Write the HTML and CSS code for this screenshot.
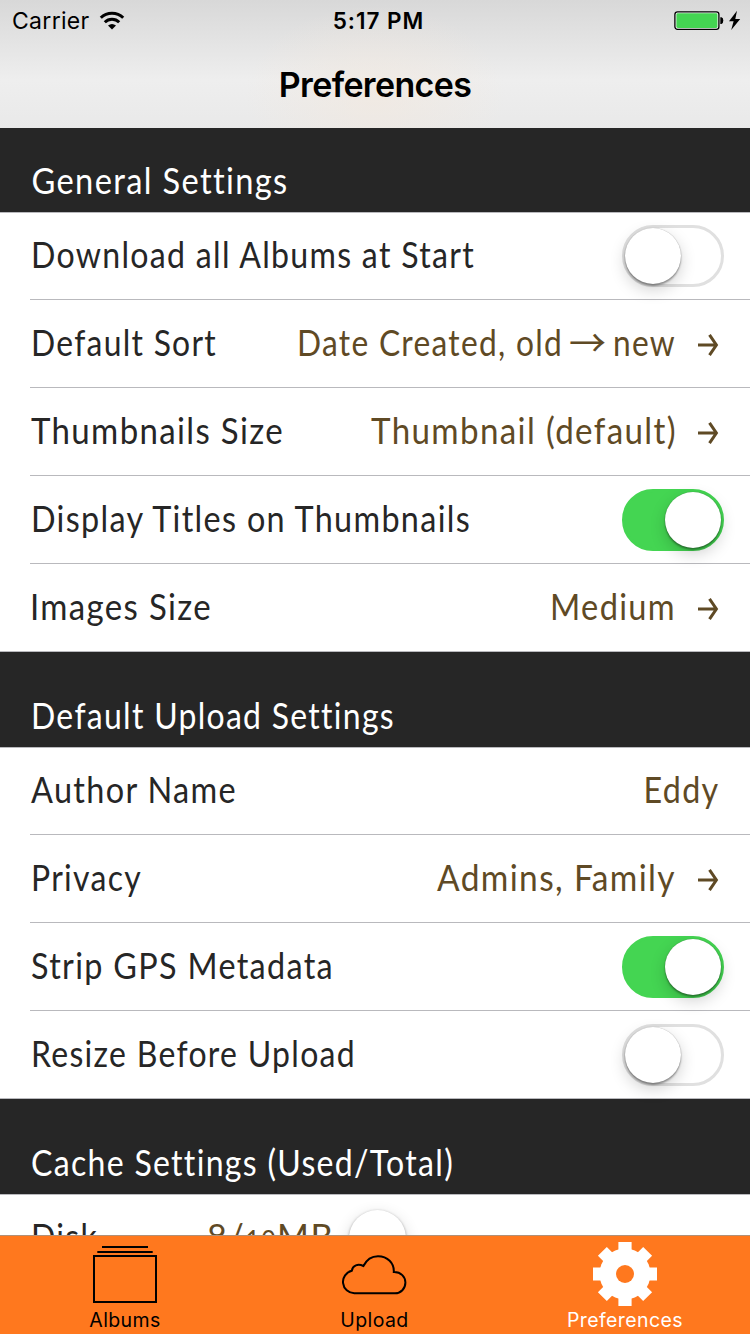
FILE: index.html
```html
<!DOCTYPE html>
<html lang="en">
<head>
<meta charset="utf-8">
<title>Preferences</title>
<link rel="stylesheet" href="styles.css">
</head>
<body>
<div class="screen">
  <header class="navbar">
    <div class="status">
      <div class="status-left">
        <span class="carrier">Carrier</span>
        <svg class="wifi" width="26" height="20" viewBox="0 0 26 20"><g fill="none" stroke="#000" stroke-width="3"><path d="M1.8 6.8A16 16 0 0 1 24.2 6.8"/><path d="M5.8 11.3A10.3 10.3 0 0 1 20.2 11.3"/></g><path d="M9 14.4Q13 11.4 17 14.4L13 18.6Z"/></svg>
      </div>
      <span class="time">5:17 PM</span>
      <svg class="battery" width="70" height="22" viewBox="0 0 70 22"><rect x=".9" y="1.8" width="44" height="17.6" rx="2.6" fill="#f4f4f4" stroke="#000" stroke-width="1.3"/><rect x="2.4" y="3.3" width="41" height="14.6" rx="1.4" fill="#44d552"/><path d="M46.3 7.2h1.2q1.8.5 1.8 3.4t-1.8 3.4h-1.2z"/><path d="M63 .7L55 11.3h4.6L57.2 20 66.2 8.9h-4.9z"/></svg>
    </div>
    <h1 class="title">Preferences</h1>
  </header>

  <main class="list">
    <h2 class="section first"><svg class="copy" width="262" height="84"><text x="1.5" y="66" textLength="257" lengthAdjust="spacingAndGlyphs">General Settings</text></svg></h2>
    <div class="group">
      <div class="row"><svg class="copy" width="450" height="87"><text x="1" y="56" textLength="444" lengthAdjust="spacingAndGlyphs">Download all Albums at Start</text></svg><span class="switch"></span></div>
      <div class="row"><svg class="copy" width="190" height="87"><text x="1" y="56" textLength="186" lengthAdjust="spacingAndGlyphs">Default Sort</text></svg>
        <svg class="copy value" width="381" height="87"><text x="2" y="56" textLength="266" lengthAdjust="spacingAndGlyphs">Date Created, old</text><text class="arrow-glyph" x="274" y="57">→</text><text x="318" y="56" textLength="63" lengthAdjust="spacingAndGlyphs">new</text></svg>
        <svg class="disclose" width="21" height="24" viewBox="0 0 21 24"><path d="M0 12H18.6M11.5 1.8L18.4 12 11.5 22.2"/></svg></div>
      <div class="row"><svg class="copy" width="258" height="87"><text x="1" y="56" textLength="253" lengthAdjust="spacingAndGlyphs">Thumbnails Size</text></svg>
        <svg class="copy value" width="305" height="87"><text x="0" y="56" textLength="306" lengthAdjust="spacingAndGlyphs">Thumbnail (default)</text></svg>
        <svg class="disclose" width="21" height="24" viewBox="0 0 21 24"><path d="M0 12H18.6M11.5 1.8L18.4 12 11.5 22.2"/></svg></div>
      <div class="row"><svg class="copy" width="445" height="87"><text x="1" y="56" textLength="440" lengthAdjust="spacingAndGlyphs">Display Titles on Thumbnails</text></svg><span class="switch on"></span></div>
      <div class="row"><svg class="copy" width="190" height="87"><text x="0" y="56" textLength="182" lengthAdjust="spacingAndGlyphs">Images Size</text></svg>
        <svg class="copy value" width="127" height="87"><text x="1" y="56" textLength="126" lengthAdjust="spacingAndGlyphs">Medium</text></svg>
        <svg class="disclose" width="21" height="24" viewBox="0 0 21 24"><path d="M0 12H18.6M11.5 1.8L18.4 12 11.5 22.2"/></svg></div>
    </div>

    <h2 class="section"><svg class="copy" width="370" height="95"><text x="1" y="77" textLength="364" lengthAdjust="spacingAndGlyphs">Default Upload Settings</text></svg></h2>
    <div class="group">
      <div class="row"><svg class="copy" width="210" height="87"><text x="1" y="56" textLength="206" lengthAdjust="spacingAndGlyphs">Author Name</text></svg>
        <svg class="copy value last" width="77" height="87"><text x="1.5" y="56" textLength="76" lengthAdjust="spacingAndGlyphs">Eddy</text></svg></div>
      <div class="row"><svg class="copy" width="115" height="87"><text x="1" y="56" textLength="111" lengthAdjust="spacingAndGlyphs">Privacy</text></svg>
        <svg class="copy value" width="240" height="87"><text x="1" y="56" textLength="239" lengthAdjust="spacingAndGlyphs">Admins, Family</text></svg>
        <svg class="disclose" width="21" height="24" viewBox="0 0 21 24"><path d="M0 12H18.6M11.5 1.8L18.4 12 11.5 22.2"/></svg></div>
      <div class="row"><svg class="copy" width="310" height="87"><text x="1" y="56" textLength="303" lengthAdjust="spacingAndGlyphs">Strip GPS Metadata</text></svg><span class="switch on"></span></div>
      <div class="row"><svg class="copy" width="330" height="87"><text x="1" y="56" textLength="325" lengthAdjust="spacingAndGlyphs">Resize Before Upload</text></svg><span class="switch"></span></div>
    </div>

    <h2 class="section"><svg class="copy" width="430" height="95"><text x="1" y="77" textLength="423" lengthAdjust="spacingAndGlyphs">Cache Settings (Used/Total)</text></svg></h2>
    <div class="group">
      <div class="row slider-row"><svg class="copy" width="177" height="87"><text x="1" y="56" textLength="67" lengthAdjust="spacingAndGlyphs">Disk</text></svg>
        <svg class="copy amount" width="142" height="87"><text x="0" y="56" textLength="127" lengthAdjust="spacingAndGlyphs">8/<tspan class="oldstyle">10</tspan>MB</text></svg><span class="knob"></span></div>
    </div>
  </main>

  <nav class="tabs">
    <a class="tab"><svg width="66" height="66" viewBox="0 0 66 66"><g fill="none" stroke="#000" stroke-width="2"><path d="M10 6H56M5.3 11H60.7"/><rect x="2" y="15" width="62" height="46"/></g></svg><span>Albums</span></a>
    <a class="tab"><svg width="66" height="66" viewBox="0 0 66 66"><path fill="none" stroke="#000" stroke-width="2" d="M12.3 52.3A11.4 11.4 0 0 1 9.8 29.8C10.6 24.2 16 22.5 21.4 25C24.5 18.8 29.5 15.2 36 15.2C45.5 15.2 52.3 22 51.8 31C59 30.8 63.4 36 63.4 41.5C63.4 47.8 58.8 52.3 53 52.3Z"/></svg><span>Upload</span></a>
    <a class="tab active"><svg width="66" height="66" viewBox="-33 -33 66 66"><g fill="#fff"><circle r="25.5"/><path d="M-6.6-32H6.6V32H-6.6ZM-32-6.6H32V6.6H-32Z"/><path transform="rotate(45)" d="M-6.3-32H6.3V32H-6.3ZM-32-6.3H32V6.3H-32Z"/></g><circle r="9" fill="#ff781e"/></svg><span>Preferences</span></a>
  </nav>
</div>
</body>
</html>
```
FILE: styles.css
```css
* { box-sizing: border-box; }
body { margin: 0; overflow: hidden; }
.screen {
  width: 750px; height: 1334px;
  display: flex; flex-direction: column;
  overflow: hidden; background: #fff;
  font-family: Inter, "Liberation Sans", sans-serif;
}
.navbar {
  height: 128px; flex: none;
  background:
    radial-gradient(ellipse 130px 90px at 375px 95px, rgba(243, 232, 221, .6), rgba(243, 232, 221, 0)),
    linear-gradient(#d8d8d8, #e2e2e2 36px, #eee 80px, #e9e9e9);
}
.status {
  height: 41px;
  display: grid; grid-template-columns: 1fr auto 1fr; align-items: center;
  padding: 0 6px 0 12px;
}
.status-left { display: flex; align-items: center; gap: 9px; }
.carrier { font-size: 23px; letter-spacing: .3px; }
.wifi { display: block; }
.time { font-size: 22.5px; font-weight: 600; letter-spacing: 1px; padding-left: 1px; }
.battery { justify-self: end; }
.title {
  margin: 0; height: 87px; line-height: 87px; text-align: center;
  font-size: 34px; font-weight: 600; letter-spacing: -.65px;
}
.list { flex: 1; min-height: 0; overflow: hidden; }
.section { margin: 0; height: 95px; padding-left: 30px; background: #262626; font-weight: 400; }
.section.first { height: 84px; }
.section .copy { fill: #fff; }
.copy {
  display: block; flex: none; overflow: visible; fill: #262626;
  font-family: Lato, "Noto Sans", sans-serif; font-size: 37px; letter-spacing: 1.5px;
}
.group { border-top: 1px solid #b9b9bd; }
.row {
  height: 88px; display: flex; align-items: center;
  margin-left: 30px; padding-right: 26px;
  border-bottom: 1px solid #b9b9bd;
}
.row:first-child { height: 87px; }
.row:first-child .copy { margin-top: -1px; }
.row:last-child { margin-left: 0; padding-left: 30px; }
.value { margin-left: auto; fill: #5f4a25; }
.amount { fill: #5f4a25; }
.value.last { margin-right: 5px; }
.arrow-glyph { font-family: "Noto Sans CJK JP", sans-serif; font-size: 37px; letter-spacing: 0; }
.oldstyle { font-size: 27px; }
.disclose {
  flex: none; margin: 2px 5px 0 22px;
  fill: none; stroke: #5f4a25; stroke-width: 3;
}
.switch {
  width: 102px; height: 62px; flex: none; margin-left: auto;
  display: flex; padding: 0; border: 3px solid #e0e0e0; border-radius: 31px;
}
.switch::before {
  content: ""; width: 56px; height: 56px; border-radius: 50%; background: #fff;
  box-shadow: 0 2px 2px rgba(0, 0, 0, .34), 0 6px 16px rgba(0, 0, 0, .18), 0 0 1px rgba(0, 0, 0, .35);
}
.switch.on { background: #44d552; border-color: #44d552; justify-content: flex-end; }
.knob {
  width: 57px; height: 57px; border-radius: 50%; background: #fff;
  box-shadow: 0 1px 3px rgba(0, 0, 0, .4), 0 5px 16px rgba(0, 0, 0, .16);
}
.tabs {
  height: 99px; flex: none; position: relative;
  display: grid; grid-template-columns: repeat(3, 250px);
  background: #ff781e; border-top: 1px solid #b09078;
}
.tab { display: flex; flex-direction: column; align-items: center; padding-top: 5px; }
.tab:nth-child(2) { padding-right: 1px; }
.tab svg { display: block; }
.tab span { font-size: 19.5px; line-height: 24px; letter-spacing: .4px; margin-top: 1px; }
.tab.active span { color: #fff; }
```
